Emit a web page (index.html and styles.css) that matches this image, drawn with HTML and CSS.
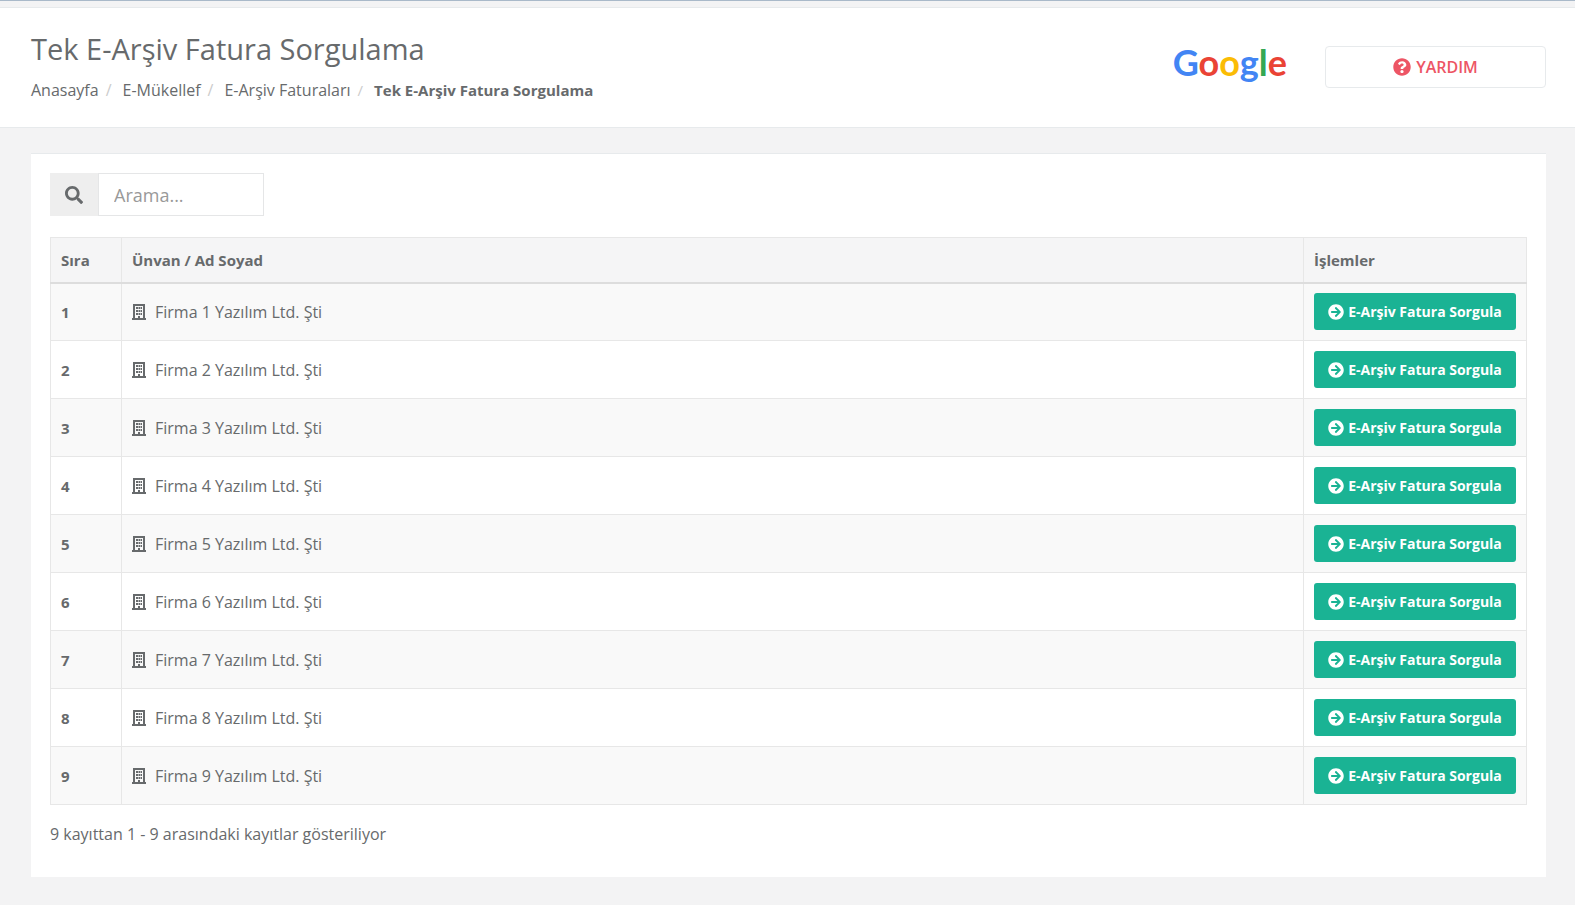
FILE: index.html
```html
<!DOCTYPE html>
<html lang="tr">
<head>
  <meta charset="UTF-8">
  <meta name="viewport" content="width=device-width, initial-scale=1">
  <title>Tek E-Arşiv Fatura Sorgulama</title>
  <link rel="stylesheet" href="styles.css">
</head>
<body>

  <svg class="sprite" aria-hidden="true">
    <symbol id="building" viewBox="0 0 14 16">
      <path d="M2 15V1h10v14M0 15h14" fill="none" stroke="currentColor" stroke-width="2"/>
      <path d="M4 3h2v2H4zM6.500 3h1.500v2H6.500zM8.500 3h1.500v2H8.500zM4 6h2v2H4zM6.500 6h1.500v2H6.500zM8.500 6h1.500v2H8.500zM4 9h2v2H4zM6.500 9h1.500v2H6.500zM8.500 9h1.500v2H8.500zM6 12h2v3H6z" fill="currentColor"/>
    </symbol>
    <symbol id="arrow" viewBox="0 0 512 512">
      <path fill="currentColor" d="M256 8c137 0 248 111 248 248S393 504 256 504 8 393 8 256 119 8 256 8zm-28.900 143.600l75.500 72.400H120c-13.300 0-24 10.700-24 24v16c0 13.300 10.700 24 24 24h182.600l-75.500 72.400c-9.700 9.300-9.900 24.800-.4 34.300l11 10.900c9.400 9.400 24.600 9.400 33.900 0L404.300 273c9.400-9.400 9.400-24.600 0-33.900L271.600 106.300c-9.400-9.400-24.600-9.400-33.900 0l-11 10.900c-9.500 9.600-9.300 25.100.4 34.400z"/>
    </symbol>
  </svg>

  <header class="page-heading">
    <div>
      <h1>Tek E-Arşiv Fatura Sorgulama</h1>
      <ol class="breadcrumb">
        <li><a href="#">Anasayfa</a></li>
        <li><a href="#">E-Mükellef</a></li>
        <li><a href="#">E-Arşiv Faturaları</a></li>
        <li class="active">Tek E-Arşiv Fatura Sorgulama</li>
      </ol>
    </div>
    <div class="heading-actions">
      <a href="#" class="logo"><span class="blue">G</span><span class="red">o</span><span class="yellow">o</span><span class="blue">g</span><span class="green">l</span><span class="red">e</span></a>
      <button type="button" class="btn-help">
        <svg width="18" height="18" viewBox="0 0 512 512" aria-hidden="true"><path fill="currentColor" d="M504 256c0 137-111 248-248 248S8 393 8 256C8 119.100 119 8 256 8s248 111.100 248 248zM262.700 90c-54.500 0-89.300 23-116.500 63.800-3.500 5.300-2.400 12.400 2.700 16.300l34.700 26.300c5.200 3.900 12.600 3 16.700-2.100 17.900-22.700 30.100-35.800 57.300-35.800 20.400 0 45.700 13.100 45.700 33 0 15-12.400 22.700-32.500 34C247.100 238.500 216 254.900 216 296v4c0 6.600 5.400 12 12 12h56c6.600 0 12-5.400 12-12v-1.300c0-28.500 83.200-29.600 83.200-106.700 0-58-60.200-102-116.500-102zM256 338c-25.400 0-46 20.600-46 46s20.600 46 46 46 46-20.600 46-46-20.600-46-46-46z"/></svg>
        YARDIM
      </button>
    </div>
  </header>

  <main class="box">
    <div class="search">
      <label for="search">
        <svg width="18" height="18" viewBox="0 0 512 512" role="img" aria-label="Ara"><path fill="currentColor" d="M505 442.700L405.300 343c-4.500-4.500-10.600-7-17-7H372c27.600-35.300 44-79.700 44-128C416 93.100 322.900 0 208 0S0 93.100 0 208s93.100 208 208 208c48.300 0 92.700-16.400 128-44v16.300c0 6.400 2.500 12.500 7 17l99.700 99.700c9.400 9.400 24.600 9.400 33.900 0l28.300-28.300c9.400-9.400 9.400-24.600.1-34zM208 336c-70.700 0-128-57.200-128-128 0-70.700 57.200-128 128-128 70.700 0 128 57.200 128 128 0 70.700-57.200 128-128 128z"/></svg>
      </label>
      <input type="text" id="search" placeholder="Arama...">
    </div>

    <table>
      <thead>
        <tr>
          <th class="col-no">Sıra</th>
          <th>Ünvan / Ad Soyad</th>
          <th class="col-action">İşlemler</th>
        </tr>
      </thead>
      <tbody id="rows"></tbody>
    </table>

    <p class="info">9 kayıttan 1 - 9 arasındaki kayıtlar gösteriliyor</p>
  </main>

  <script>
    const rows = document.getElementById('rows');

    for (let i = 1; i <= 9; i++) {
      const tr = document.createElement('tr');
      tr.innerHTML = `
        <th>${i}</th>
        <td><span class="company"><svg width="14" height="16"><use href="#building"/></svg>Firma ${i} Yazılım Ltd. Şti</span></td>
        <td><button type="button" class="btn-query"><svg width="16" height="16"><use href="#arrow"/></svg>E-Arşiv Fatura Sorgula</button></td>`;
      rows.appendChild(tr);
    }
  </script>
</body>
</html>
```
FILE: styles.css
```css
* {
  box-sizing: border-box;
}

body {
  font-family: "Trebuchet MS", "Open Sans", sans-serif;
  font-size: 16px;
  line-height: 24px;
  margin: 0;
  padding-top: 6px;
  background: #f3f3f4;
  border-top: 1px solid #a9b9c9;
  color: #676a6c;
}

a {
  color: inherit;
  text-decoration: none;
}

button, input {
  font-family: inherit;
  color: inherit;
}

.sprite {
  display: none;
}

.page-heading {
  display: flex;
  justify-content: space-between;
  height: 121px;
  padding: 23px 29px 0 31px;
  background: #fff;
  border-top: 1px solid #e7eaec;
  border-bottom: 1px solid #e7eaec;
}

h1 {
  margin: 0 0 11px;
  font-size: 29px;
  line-height: 36px;
  font-weight: 400;
}

.breadcrumb {
  display: flex;
  margin: 0;
  padding: 0;
  list-style: none;
}

.breadcrumb li + li::before {
  content: "/";
  padding: 0 11px 0 7px;
  color: #ccc;
  font-weight: 400;
}

.breadcrumb .active {
  font-size: 15px;
  font-weight: 700;
}

.heading-actions {
  display: flex;
  gap: 38px;
  padding-top: 15px;
}

.logo {
  font-family: Lato, sans-serif;
  font-size: 36px;
  line-height: 32px;
  font-weight: 700;
}

.blue { color: #4285f4; }
.red { color: #ea4335; }
.yellow { color: #fbbc05; }
.green { color: #34a853; }

.btn-help {
  display: flex;
  align-items: center;
  justify-content: center;
  gap: 5px;
  width: 221px;
  height: 42px;
  background: #fff;
  border: 1px solid #e7eaec;
  border-radius: 4px;
  color: #ed5565;
  font-size: 16px;
  font-weight: 600;
}

.box {
  margin: 25px 29px 28px 31px;
  padding: 19px;
  background: #fff;
  border-top: 1px solid #e7eaec;
}

.search {
  display: flex;
  width: 214px;
  height: 43px;
  margin-bottom: 21px;
}

.search label {
  display: flex;
  align-items: center;
  justify-content: center;
  width: 48px;
  background: #eee;
}

.search input {
  flex: 1;
  min-width: 0;
  padding: 0 15px;
  border: 1px solid #e5e6e7;
  font-size: 18px;
}

.search input::placeholder {
  color: #999;
}

table {
  width: 100%;
  border-collapse: collapse;
}

th, td {
  height: 58px;
  padding: 0 10px;
  border: 1px solid #e7e7e7;
  text-align: left;
}

th {
  font-size: 15px;
}

thead th {
  height: 45px;
  background: #f5f5f6;
  border-bottom: 2px solid #ddd;
}

tbody tr:nth-child(odd) {
  background: #f9f9f9;
}

.col-no {
  width: 71px;
}

.col-action {
  width: 223px;
}

.company {
  display: flex;
  align-items: center;
  gap: 9px;
}

.btn-query {
  display: flex;
  align-items: center;
  justify-content: center;
  gap: 4px;
  width: 100%;
  height: 37px;
  padding: 0;
  background: #1ab394;
  border: 0;
  border-radius: 3px;
  color: #fff;
  font-size: 14px;
  font-weight: 700;
  white-space: nowrap;
}

.info {
  margin: 17px 0 12px;
}
```
